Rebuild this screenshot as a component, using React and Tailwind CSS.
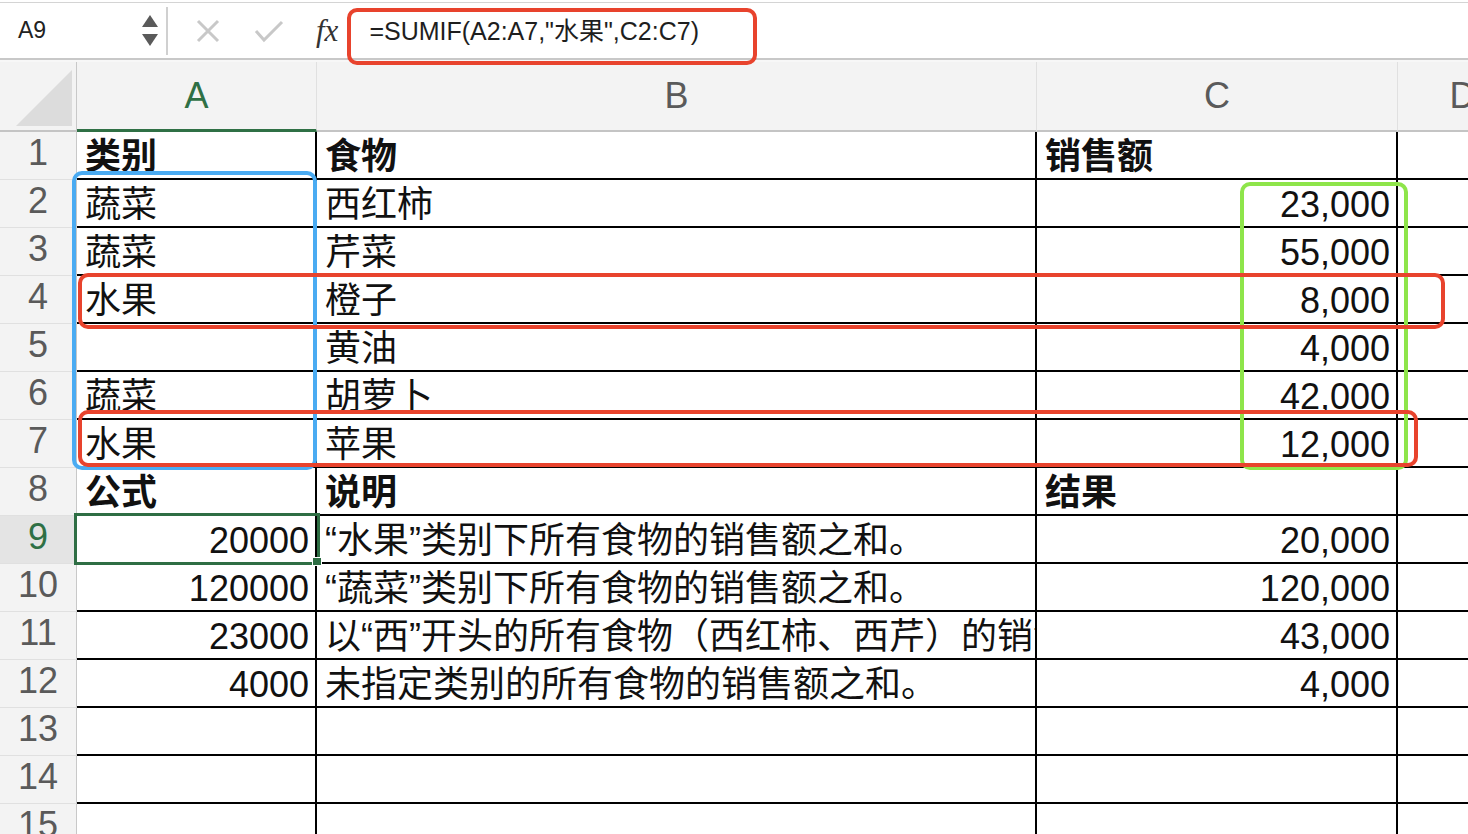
const FONT = { fontFamily: '"Liberation Sans", "Noto Sans CJK SC", sans-serif' };

const rows = [
  { n: 1, a: '类别', b: '食物', c: '销售额', bold: true },
  { n: 2, a: '蔬菜', b: '西红柿', c: '23,000' },
  { n: 3, a: '蔬菜', b: '芹菜', c: '55,000' },
  { n: 4, a: '水果', b: '橙子', c: '8,000' },
  { n: 5, a: '', b: '黄油', c: '4,000' },
  { n: 6, a: '蔬菜', b: '胡萝卜', c: '42,000' },
  { n: 7, a: '水果', b: '苹果', c: '12,000' },
  { n: 8, a: '公式', b: '说明', c: '结果', bold: true },
  { n: 9, a: '20000', b: '“水果”类别下所有食物的销售额之和。', c: '20,000' },
  { n: 10, a: '120000', b: '“蔬菜”类别下所有食物的销售额之和。', c: '120,000' },
  { n: 11, a: '23000', b: '以“西”开头的所有食物（西红柿、西芹）的销售额之和。', c: '43,000' },
  { n: 12, a: '4000', b: '未指定类别的所有食物的销售额之和。', c: '4,000' },
  { n: 13, a: '', b: '', c: '' },
  { n: 14, a: '', b: '', c: '' },
  { n: 15, a: '', b: '', c: '' },
];

const isNumber = (s) => /^[0-9,]+$/.test(s);

const FormulaBar = () => (
  <div className="h-[62px] flex flex-col bg-white">
    <div className="h-[2px] bg-white" />
    <div className="h-px bg-[#d4d4d4]" />
    <div className="flex-1 flex items-center">
      {/* name box */}
      <div className="w-[166px] h-full flex items-center justify-between pl-[18px] pr-[8px]">
        <span className="text-[23px] text-[#222]">A9</span>
        <div className="flex flex-col gap-[7px] items-center">
          <svg width="16" height="12" viewBox="0 0 16 12"><polygon points="8,0 16,12 0,12" fill="#5a5a5a" /></svg>
          <svg width="16" height="12" viewBox="0 0 16 12"><polygon points="0,0 16,0 8,12" fill="#5a5a5a" /></svg>
        </div>
      </div>
      <div className="w-[2px] h-[48px] bg-[#d0d0d0]" />
      <div className="flex items-center pl-[28px] gap-[34px]">
        <svg width="24" height="24" viewBox="0 0 24 24">
          <path d="M2 2 L22 22 M22 2 L2 22" stroke="#c8c8c8" strokeWidth="3" />
        </svg>
        <svg width="30" height="24" viewBox="0 0 30 24">
          <path d="M2 12 L10 21 L28 3" stroke="#c8c8c8" strokeWidth="3" fill="none" />
        </svg>
      </div>
      <span
        className="ml-[32px] text-[31px] italic text-[#333] leading-none"
        style={{ fontFamily: '"Liberation Serif", serif' }}
      >
        fx
      </span>
      <div className="ml-[12px] w-px h-[32px] bg-[#d8d8d8]" />
      <span className="ml-[18px] text-[25px] text-[#1e1e1e] pt-[2px]">=SUMIF(A2:A7,"水果",C2:C7)</span>
    </div>
    <div className="h-[2px] bg-[#c8c8c8]" />
    <div className="h-[2px] bg-[#f7f7f7]" />
  </div>
);

const Header = () => (
  <>
    <div className="h-[70px] bg-[#f3f3f3] border-r border-[#c8c8c8] border-b-2 border-b-[#c4c4c4] flex items-end justify-end pr-[4px] pb-[4px]">
      <svg width="56" height="56" viewBox="0 0 56 56"><polygon points="56,0 56,56 0,56" fill="#dcdcdc" /></svg>
    </div>
    {['A', 'B', 'C', 'D'].map((c) => (
      <div
        key={c}
        className={
          'h-[70px] bg-[#f3f3f3] border-r border-[#e0e0e0] flex items-center justify-center text-[36px] leading-[38px] ' +
          (c === 'A' ? 'border-b-[3px] border-b-[#2f7045] text-[#2f7045]' : 'border-b-2 border-b-[#c4c4c4] text-[#5a5a5a]')
        }
      >
        {c}
      </div>
    ))}
  </>
);

const Cell = ({ value, bold, right, last }) => (
  <div
    className={
      'h-[48px] border-b-2 border-black flex items-end pb-[2px] overflow-hidden whitespace-nowrap leading-[38px] text-[36px] text-[#111] ' +
      (last ? '' : 'border-r-2 ') +
      (right ? 'justify-end pr-[6px] ' : 'pl-[8px] ') +
      (bold ? 'font-bold' : '')
    }
  >
    {value}
  </div>
);

export default function App() {
  return (
    <div className="relative w-[1468px] h-[834px] overflow-hidden bg-white" style={FONT}>
      <FormulaBar />
      <div className="grid grid-cols-[77px_240px_720px_361px_130px]">
        <Header />
        {rows.map((r) => (
          <div key={r.n} className="contents">
            <div
              className={
                'h-[48px] border-r border-[#c8c8c8] border-b border-b-[#e0e0e0] flex items-center justify-center pb-[6px] text-[36px] leading-[38px] ' +
                (r.n === 9 ? 'bg-[#e4e4e4] text-[#2f7045]' : 'bg-[#f3f3f3] text-[#5a5a5a]')
              }
            >
              {r.n}
            </div>
            <Cell value={r.a} bold={r.bold} right={isNumber(r.a)} />
            <Cell value={r.b} bold={r.bold} />
            <Cell value={r.c} bold={r.bold} right={isNumber(r.c)} />
            <Cell value="" last />
          </div>
        ))}
      </div>

      {/* annotations */}
      <div className="absolute left-[347px] top-[8px] w-[410px] h-[57px] border-[4px] border-[#e8432d] rounded-[10px]" />
      <div className="absolute left-[72px] top-[171px] w-[245px] h-[299px] border-[4px] border-[#4aabf2] rounded-[10px]" />
      <div className="absolute left-[1240px] top-[182px] w-[168px] h-[288px] border-[4px] border-[#8ee54a] rounded-[10px]" />
      <div className="absolute left-[78px] top-[273px] w-[1367px] h-[56px] border-[4px] border-[#e8432d] rounded-[10px]" />
      <div className="absolute left-[78px] top-[410px] w-[1340px] h-[57px] border-[4px] border-[#e8432d] rounded-[10px]" />

      {/* selected cell A9 */}
      <div className="absolute left-[74px] top-[513px] w-[246px] h-[52px] border-[3px] border-[#2e6e44]" />
      <div className="absolute left-[312px] top-[557px] w-[10px] h-[9px] bg-[#2e6e44] border border-white" />
    </div>
  );
}
